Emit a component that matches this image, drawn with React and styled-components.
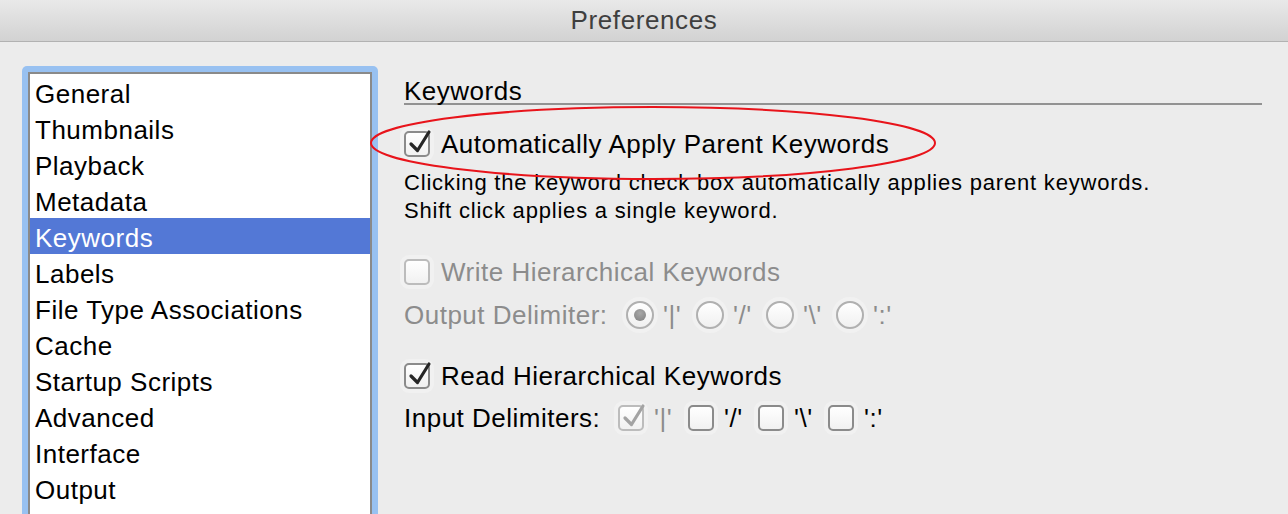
import React from 'react';
import styled, { createGlobalStyle } from 'styled-components';

const GlobalStyle = createGlobalStyle`
  html, body {
    margin: 0;
    padding: 0;
    background: #ececec;
  }
  body {
    font-family: 'Liberation Sans', Arial, sans-serif;
    letter-spacing: 0.5px;
    color: #000;
  }
`;

const Window = styled.div`
  position: relative;
  width: 1288px;
  height: 514px;
  overflow: hidden;
  background: #ececec;
`;

const TitleBar = styled.div`
  height: 41px;
  display: flex;
  align-items: center;
  justify-content: center;
  background: linear-gradient(#e9e9e9, #d2d2d2);
  border-bottom: 1px solid #b2b2b2;
  font-size: 26px;
  letter-spacing: 0.6px;
  color: #3f3f3f;
`;

const Body = styled.div`
  display: flex;
  align-items: flex-start;
  padding: 24px 0 0 22px;
  gap: 26px;
`;

const FocusRing = styled.div`
  width: 356px;
  height: 460px;
  box-sizing: border-box;
  padding: 6px;
  background: #98c1f1;
  border-radius: 5px 5px 0 0;
`;

const List = styled.ul`
  list-style: none;
  margin: 0;
  padding: 0;
  height: 100%;
  box-sizing: border-box;
  background: #fff;
  border: 2px solid #8a8a8a;
  border-bottom: none;
`;

const ListItem = styled.li`
  height: 36px;
  line-height: 40px;
  padding-left: 5px;
  font-size: 26px;
  background: ${p => (p.$selected ? '#5378d6' : 'transparent')};
  color: ${p => (p.$selected ? '#fff' : '#000')};
`;

const Panel = styled.div`
  flex: 1;
  padding-right: 26px;
  display: flex;
  flex-direction: column;
`;

const Heading = styled.div`
  margin-top: 9px;
  height: 28px;
  line-height: 32px;
  font-size: 26px;
  border-bottom: 2px solid #929292;
`;

const Row = styled.div`
  display: flex;
  align-items: center;
  height: 36px;
  margin-top: ${p => p.$top || 0}px;
  font-size: 26px;
  color: ${p => (p.$disabled ? '#8c8c8c' : '#000')};
`;

const Label = styled.span`
  width: ${p => p.$width}px;
  flex: none;
`;

const Description = styled.div`
  margin-top: 7px;
  font-size: 22px;
  letter-spacing: 0.8px;
  line-height: 28px;
`;

const Box = styled.span`
  position: relative;
  flex: none;
  width: 26px;
  height: 26px;
  box-sizing: border-box;
  border: 2px solid ${p => (p.$disabled ? '#bcbcbc' : '#8b8b8b')};
  border-radius: 5px;
  background: linear-gradient(#ffffff, #f1f1f1);
  box-shadow: 0 0 0 4px #f1f1f1;
  margin-right: ${p => p.$gap || 11}px;

  svg {
    position: absolute;
    left: 1px;
    top: -5px;
  }
`;

const Radio = styled.span`
  position: relative;
  flex: none;
  width: 28px;
  height: 28px;
  box-sizing: border-box;
  border: 2px solid #b0b0b0;
  border-radius: 50%;
  background: linear-gradient(#ffffff, #f0f0f0);
  box-shadow: 0 0 0 4px #f1f1f1;
  margin-right: 9px;
  display: flex;
  align-items: center;
  justify-content: center;

  &::after {
    content: '';
    display: ${p => (p.$on ? 'block' : 'none')};
    width: 12px;
    height: 12px;
    border-radius: 50%;
    background: radial-gradient(circle at 50% 35%, #a8a8a8, #7f7f7f);
  }
`;

const Option = styled.span`
  display: flex;
  align-items: center;
  width: 70px;
  flex: none;
  color: ${p => (p.$muted ? '#8c8c8c' : 'inherit')};
`;

const Ellipse = styled.svg`
  position: absolute;
  left: 368px;
  top: 104px;
  pointer-events: none;
`;

const Check = ({ color }) => (
  <svg width="26" height="28" viewBox="0 0 26 28">
    <path d="M4 16 L10.5 22.5 L22 4" fill="none" stroke={color} strokeWidth="3.2" strokeLinecap="round" strokeLinejoin="round" />
  </svg>
);

const Checkbox = ({ checked, disabled, gap }) => (
  <Box $disabled={disabled} $gap={gap}>
    {checked && <Check color={disabled ? '#a3a3a3' : '#262626'} />}
  </Box>
);

const sections = [
  'General', 'Thumbnails', 'Playback', 'Metadata', 'Keywords', 'Labels',
  'File Type Associations', 'Cache', 'Startup Scripts', 'Advanced', 'Interface', 'Output',
];

const delimiters = ["'|'", "'/'", "'\\'", "':'"];

export default function App() {
  return (
    <Window>
      <GlobalStyle />
      <TitleBar>Preferences</TitleBar>
      <Body>
        <FocusRing>
          <List>
            {sections.map(s => (
              <ListItem key={s} $selected={s === 'Keywords'}>{s}</ListItem>
            ))}
          </List>
        </FocusRing>
        <Panel>
          <Heading>Keywords</Heading>
          <Row $top={21}>
            <Checkbox checked />
            Automatically Apply Parent Keywords
          </Row>
          <Description>
            Clicking the keyword check box automatically applies parent keywords.
            <br />
            Shift click applies a single keyword.
          </Description>
          <Row $top={29} $disabled>
            <Checkbox disabled />
            Write Hierarchical Keywords
          </Row>
          <Row $top={7} $disabled>
            <Label $width={222}>Output Delimiter:</Label>
            {delimiters.map((d, i) => (
              <Option key={d}>
                <Radio $on={i === 0} />
                {d}
              </Option>
            ))}
          </Row>
          <Row $top={25}>
            <Checkbox checked />
            Read Hierarchical Keywords
          </Row>
          <Row $top={6}>
            <Label $width={214}>Input Delimiters:</Label>
            {delimiters.map((d, i) => (
              <Option key={d} $muted={i === 0}>
                <Checkbox checked={i === 0} disabled={i === 0} gap={10} />
                {d}
              </Option>
            ))}
          </Row>
        </Panel>
      </Body>
      <Ellipse width="572" height="80" viewBox="0 0 572 80">
        <ellipse cx="285" cy="39" rx="282" ry="36" fill="none" stroke="#e8141b" strokeWidth="2" />
      </Ellipse>
    </Window>
  );
}
